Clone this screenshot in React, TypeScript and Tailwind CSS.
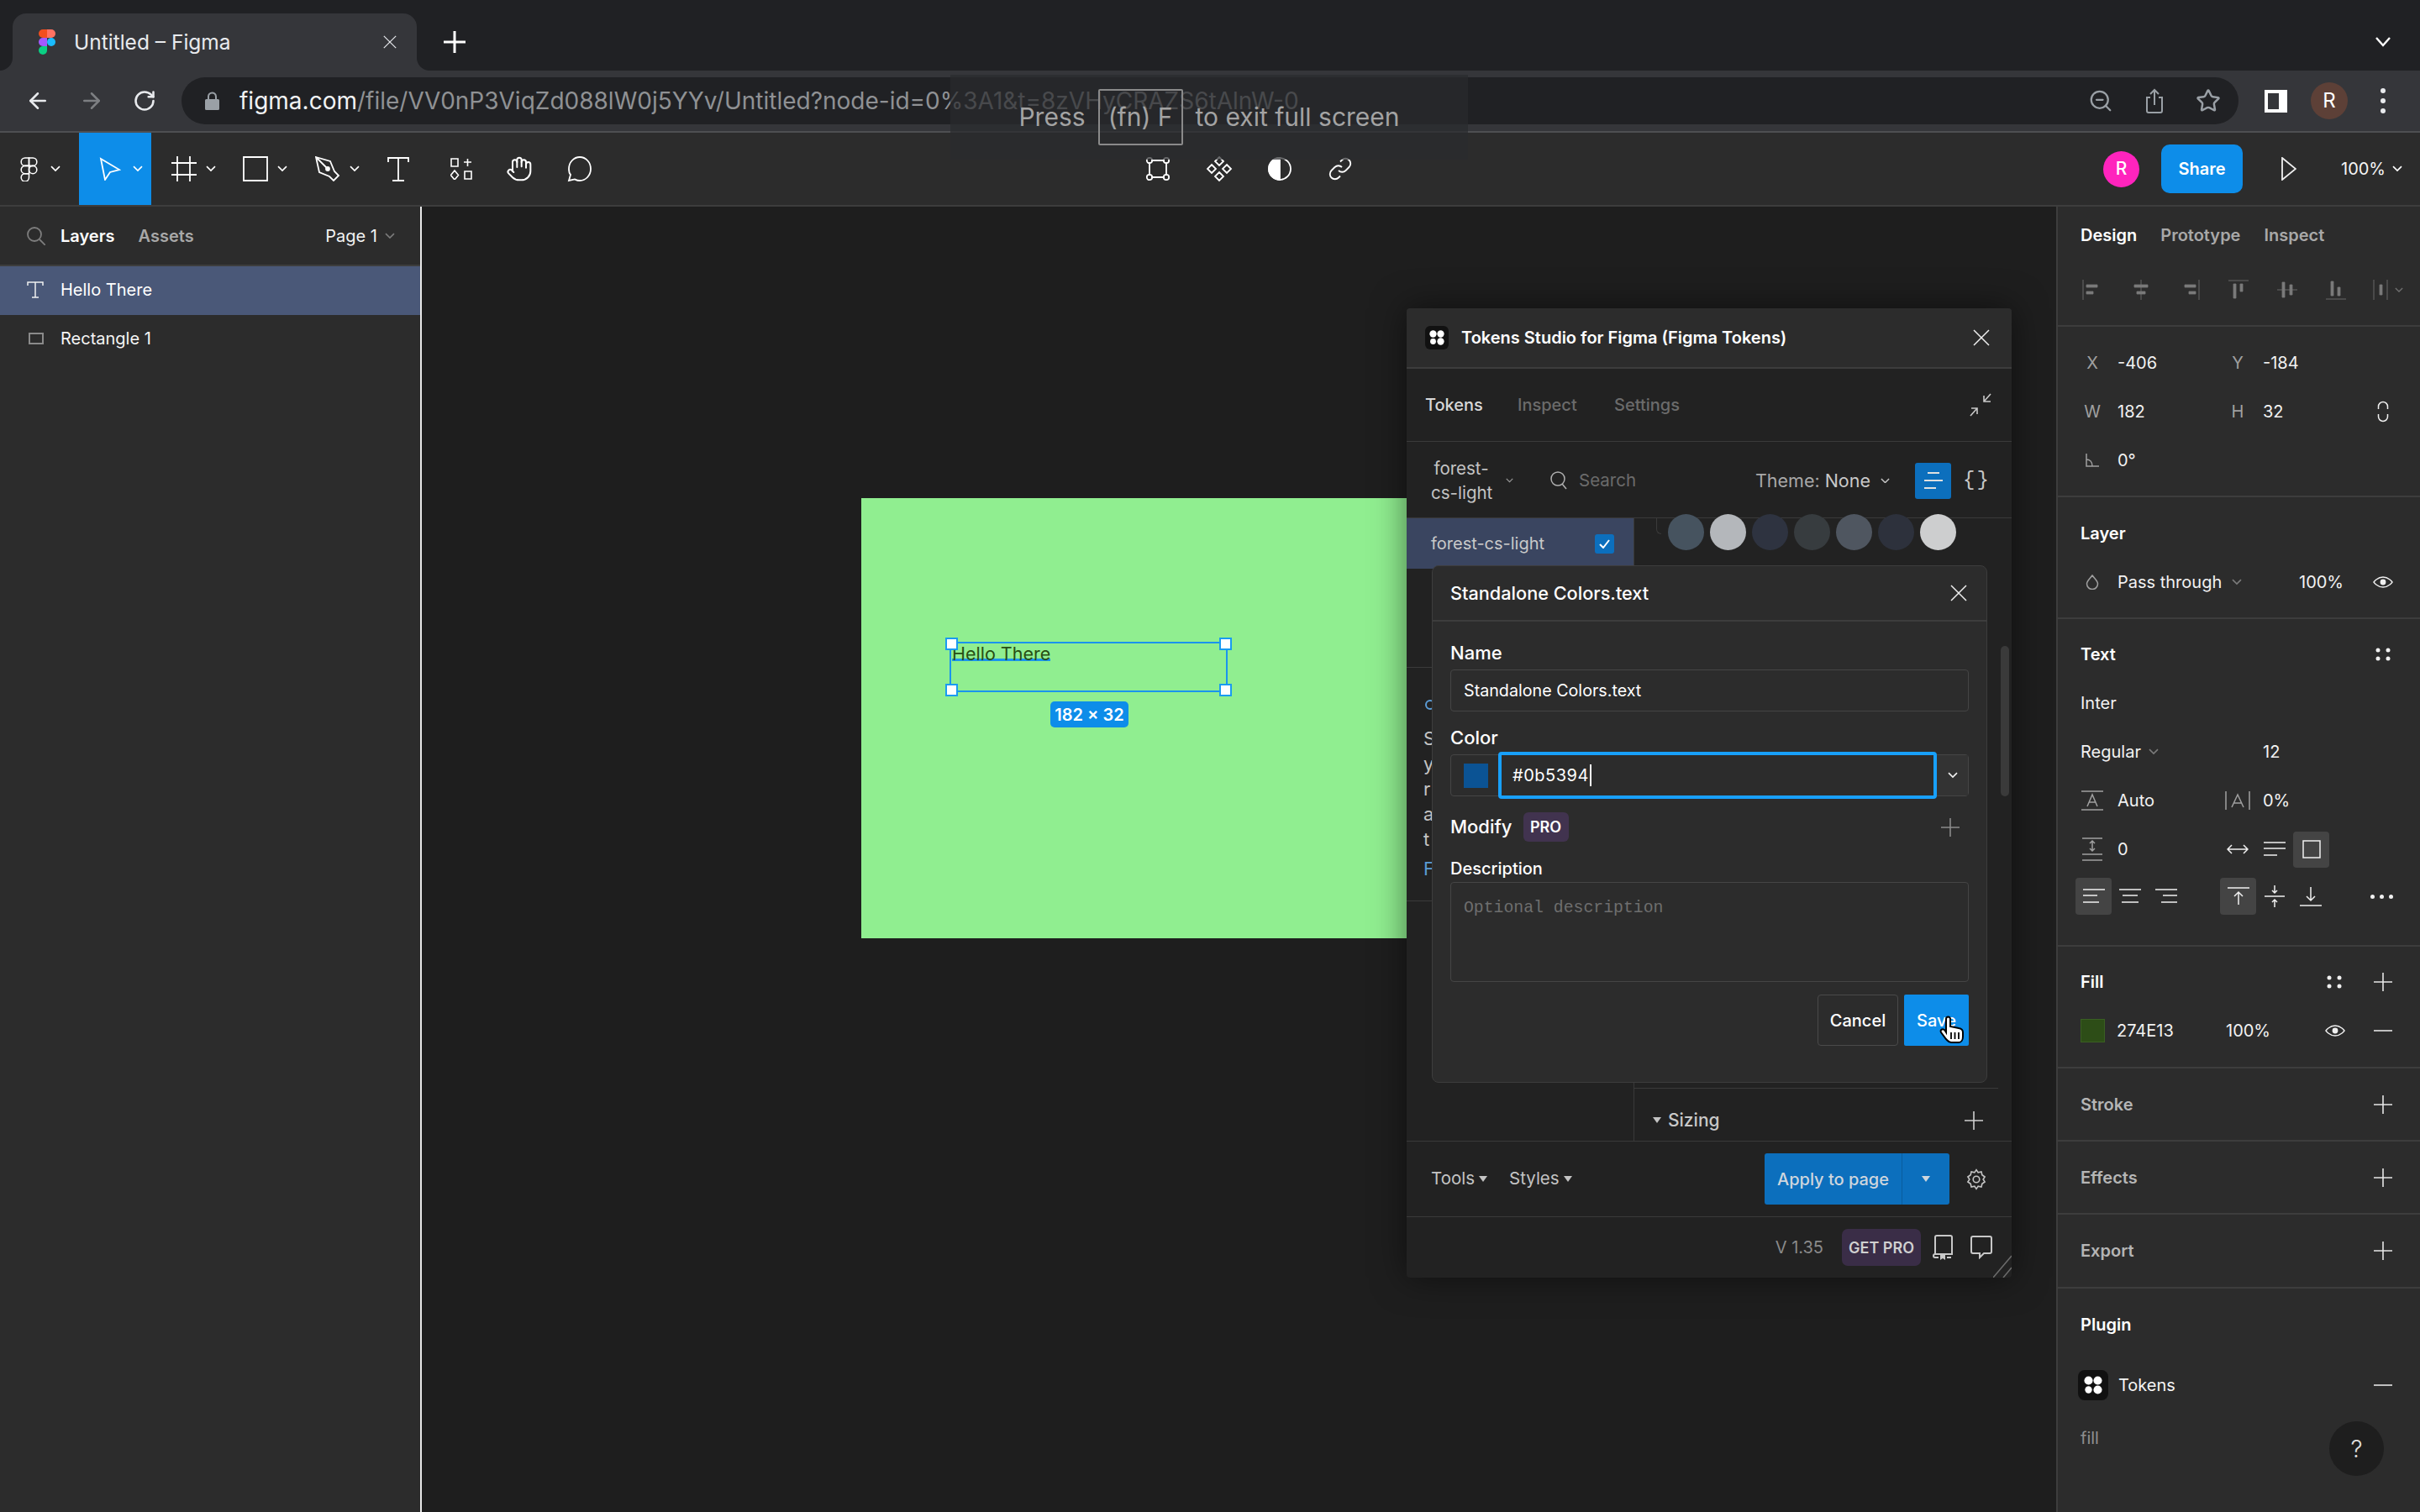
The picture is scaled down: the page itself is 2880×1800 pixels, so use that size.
import type { ReactNode } from 'react';
import { ArrowLeft, ArrowRight, RotateCw, ZoomOut, Star, Hand } from 'lucide-react';

const Caret = ({ c = '#ffffff', w = 12 }: { c?: string; w?: number }) => (
  <svg width={w} height={w * 0.6} viewBox="0 0 12 7" fill="none" stroke={c} strokeWidth="1.6"><path d="M1 1l5 5 5-5" /></svg>
);

const Tri = ({ c = '#c4c4c4', w = 10 }: { c?: string; w?: number }) => (
  <svg width={w} height={w * 0.7} viewBox="0 0 10 7" fill={c}><path d="M0 0h10L5 7z" /></svg>
);

const PlusIcon = ({ c = '#e6e6e6', s = 22 }: { c?: string; s?: number }) => (
  <svg width={s} height={s} viewBox="0 0 22 22" stroke={c} strokeWidth="1.6"><path d="M0 11h22M11 0v22" /></svg>
);

const Minus = () => (
  <svg width="22" height="4" viewBox="0 0 22 4" stroke="#e6e6e6" strokeWidth="1.6"><path d="M0 2h22" /></svg>
);

const Cross = ({ s = 20, c = '#f0f0f0' }: { s?: number; c?: string }) => (
  <svg width={s} height={s} viewBox="0 0 20 20" stroke={c} strokeWidth="1.5"><path d="M1 1l18 18M19 1L1 19" /></svg>
);

const EyeIcon = () => (
  <svg width="24" height="14" viewBox="0 0 24 14" fill="none" stroke="#f0f0f0" strokeWidth="1.4">
    <path d="M1 7s4-6 11-6 11 6 11 6-4 6-11 6S1 7 1 7z" />
    <circle cx="12" cy="7" r="3.4" fill="#f0f0f0" stroke="none" />
  </svg>
);

const FourDots = () => (
  <svg width="18" height="16" viewBox="0 0 18 16" fill="#f0f0f0">
    <circle cx="3" cy="3" r="2.5" /><circle cx="15" cy="3" r="2.5" /><circle cx="3" cy="13" r="2.5" /><circle cx="15" cy="13" r="2.5" />
  </svg>
);

const TokensLogo = ({ box, dot }: { box: string; dot: number }) => (
  <div className={`flex items-center justify-center bg-[#111111] ${box}`}>
    <svg width={dot} height={dot} viewBox="0 0 20 20" fill="#ffffff">
      <circle cx="5" cy="5" r="4.6" /><circle cx="15" cy="5" r="4.6" /><circle cx="5" cy="15" r="3.8" /><circle cx="15" cy="15" r="4.6" />
    </svg>
  </div>
);

const FigmaMono = () => (
  <svg width="21" height="29" viewBox="0 0 20 28" fill="none" stroke="#ffffff" strokeWidth="1.5">
    <path d="M10 1H5.5a4.5 4.5 0 0 0 0 9H10z" />
    <path d="M10 1h4.5a4.5 4.5 0 0 1 0 9H10z" />
    <path d="M10 10H5.5a4.5 4.5 0 0 0 0 9H10z" />
    <circle cx="14.5" cy="14.5" r="4.5" />
    <path d="M5.5 19H10v4.5a4.5 4.5 0 1 1-4.5-4.5z" />
  </svg>
);

const FigmaColor = () => (
  <svg width="20" height="30" viewBox="0 0 20 30">
    <path fill="#f24e1e" d="M10 0H5a5 5 0 0 0 0 10h5z" />
    <path fill="#ff7262" d="M10 0h5a5 5 0 0 1 0 10h-5z" />
    <path fill="#a259ff" d="M10 10H5a5 5 0 0 0 0 10h5z" />
    <circle fill="#1abcfe" cx="15" cy="15" r="5" />
    <path fill="#0acf83" d="M5 20h5v5a5 5 0 1 1-5-5z" />
  </svg>
);

const ToolIcon = ({ name }: { name: string }) => {
  const common = { fill: 'none', stroke: '#ffffff', strokeWidth: 1.8 };
  if (name === 'cursor') return <svg width="26" height="28" viewBox="0 0 26 28" {...common}><path d="M2 2l22 13-11 3-6 9z" /></svg>;
  if (name === 'frame') return <svg width="30" height="30" viewBox="0 0 30 30" {...common}><path d="M0 8h30M0 22h30M7 0v30M22 0v30" /></svg>;
  if (name === 'rect') return <svg width="30" height="30" viewBox="0 0 30 30" {...common}><path d="M1 1h28v28H1z" /></svg>;
  if (name === 'pen') return <svg width="30" height="30" viewBox="0 0 30 30" {...common}><path d="M1 1l17 5 5 12 5 5-6 6-5-5-12-5zM1 1l13 13" /><circle cx="15" cy="15" r="2" fill="#ffffff" /></svg>;
  if (name === 'text') return <svg width="26" height="30" viewBox="0 0 26 30" {...common}><path d="M1 7V2h24v5M13 2v27M6 29h14" /></svg>;
  if (name === 'comps') return <svg width="26" height="26" viewBox="0 0 26 26" fill="none" stroke="#ffffff" strokeWidth="1.6"><path d="M1 1h8v9H1zM16 5h9M20.500 1v9M17 16h8v9h-8zM5 15l4.500 5.500L5 26 .5 20.500z" /></svg>;
  if (name === 'hand') return <Hand size={32} color="#ffffff" strokeWidth={1.5} />;
  if (name === 'comment') return <svg width="30" height="32" viewBox="0 0 30 32" {...common}><path d="M15 2c7 0 13 6 13 14s-6 14-13 14c-3 0-4-.6-6-1.6L2 30l2-7C2 21 2 18 2 16 2 8 8 2 15 2z" /></svg>;
  if (name === 'transform') return <svg width="30" height="30" viewBox="0 0 30 30" {...common}><path d="M7 5h16M5 7v16M25 7v16M7 25h16" /><circle cx="5" cy="5" r="3.2" /><circle cx="25" cy="5" r="3.2" /><circle cx="5" cy="25" r="3.2" /><circle cx="25" cy="25" r="3.2" /></svg>;
  if (name === 'comp') return <svg width="32" height="32" viewBox="0 0 32 32" {...common}><path d="M16 2l5 5-5 5-5-5zM7 11l5 5-5 5-5-5zM25 11l5 5-5 5-5-5zM16 20l5 5-5 5-5-5z" /></svg>;
  if (name === 'contrast') return <svg width="30" height="30" viewBox="0 0 30 30" {...common}><circle cx="15" cy="15" r="13" /><path d="M15 2a13 13 0 0 0 0 26z" fill="#ffffff" /></svg>;
  return <svg width="28" height="28" viewBox="0 0 28 28" {...common}><path d="M12 16a6 6 0 0 0 8.5 0l4-4A6 6 0 0 0 16 3.500l-2 2M16 12a6 6 0 0 0-8.500 0l-4 4A6 6 0 0 0 12 24.500l2-2" /></svg>;
};

const Tool = ({ className, name, chev, chevGap = 'ml-[11px]' }: { className: string; name: string; chev?: boolean; chevGap?: string }) => (
  <div className={`flex h-full items-center ${className}`}>
    <ToolIcon name={name} />
    {chev && <div className={chevGap}><Caret /></div>}
  </div>
);

const AlignIcon = ({ kind }: { kind: string }) => {
  const paths: Record<string, string> = {
    left: 'M1 0v24M5 6h13v3H5zM5 14h8v3H5z',
    hcenter: 'M12 0v24M4 6h16v3H4zM7 14h10v3H7z',
    right: 'M23 0v24M6 6h13v3H6zM11 14h8v3h-8z',
    top: 'M0 1h24M6 5h3v17H6zM14 5h3v9h-3z',
    vcenter: 'M0 12h24M6 3h3v18H6zM15 6h3v12h-3z',
    bottom: 'M0 23h24M6 2h3v17H6zM14 9h3v10h-3z',
    dist: 'M1 0v24M17 0v24M8 6h3v12H8z',
  };
  return (
    <svg width="24" height="24" viewBox="0 0 24 24" fill="#7a7a7a" stroke="#7a7a7a" strokeWidth="0.8"><path d={paths[kind]} /></svg>
  );
};

const LineIcon = ({ d, w = 26, h = 22, c = '#f0f0f0' }: { d: string; w?: number; h?: number; c?: string }) => (
  <svg width={w} height={h} viewBox={`0 0 ${w} ${h}`} fill="none" stroke={c} strokeWidth="1.5"><path d={d} /></svg>
);

// right panel row: icon, value, icon, value, action
const PropRow = ({ a, b, c, d, e, className = 'h-[58px]' }: { a?: ReactNode; b?: ReactNode; c?: ReactNode; d?: ReactNode; e?: ReactNode; className?: string }) => (
  <div className={`grid grid-cols-[71px_122px_51px_117px_52px] items-center text-[20px] text-[#f2f2f2] ${className}`}>
    <div className="flex justify-center pl-[11px] text-[#a0a0a0]">{a}</div>
    <div className="flex items-center">{b}</div>
    <div className="flex justify-center pr-[9px] text-[#a0a0a0]">{c}</div>
    <div className="flex items-center">{d}</div>
    <div className="flex justify-center">{e}</div>
  </div>
);

const SectionHead = ({ title, dim, children }: { title: string; dim?: boolean; children?: ReactNode }) => (
  <div className="flex h-full items-center justify-between pl-[27px] pr-[29px]">
    <span className={`text-[20px] font-semibold ${dim ? 'text-[#b5b5b5]' : 'text-white'}`}>{title}</span>
    <div className="flex items-center">{children}</div>
  </div>
);

const dividers = 'border-b-[2px] border-[#3d3d3d]';

function TabStrip() {
  return (
    <div className="flex h-[84px] items-end bg-[#202124] pl-[15px]">
      <div className="relative flex h-[68px] w-[481px] items-center rounded-t-[16px] bg-[#35363a] pl-[31px]">
        <svg className="absolute bottom-0 left-[-15px]" width="15" height="15" viewBox="0 0 15 15" fill="#35363a"><path d="M15 0v15H0c8 0 15-7 15-15z" /></svg>
        <svg className="absolute bottom-0 right-[-15px]" width="15" height="15" viewBox="0 0 15 15" fill="#35363a"><path d="M0 0v15h15C7 15 0 8 0 0z" /></svg>
        <FigmaColor />
        <span className="ml-[22px] text-[24.500px] text-[#e8eaed]">Untitled – Figma</span>
        <div className="ml-auto mr-[24px]"><Cross s={16} c="#e8eaed" /></div>
      </div>
      <div className="mb-[21px] ml-[32px]"><svg width="26" height="26" viewBox="0 0 26 26" stroke="#ffffff" strokeWidth="3"><path d="M0 13h26M13 0v26" /></svg></div>
      <div className="mb-[28px] ml-auto mr-[35px]"><svg width="18" height="12" viewBox="0 0 18 12" fill="none" stroke="#ffffff" strokeWidth="2.4"><path d="M1 1l8 9 8-9" /></svg></div>
    </div>
  );
}

function AddressBar() {
  return (
    <div className="flex h-[72px] items-center bg-[#35363a] pl-[30px]">
      <ArrowLeft size={30} color="#e8eaed" strokeWidth={2} />
      <div className="ml-[34px]"><ArrowRight size={30} color="#7d7f82" strokeWidth={2} /></div>
      <div className="ml-[34px]"><RotateCw size={28} color="#e8eaed" strokeWidth={2.2} /></div>
      <div className="ml-[30px] flex h-[56px] w-[2448px] items-center rounded-[28px] bg-[#202124] pl-[28px] pr-[21px]">
        <svg width="17" height="22" viewBox="0 0 17 22" fill="#9aa0a6"><path d="M3 9V6a5.500 5.500 0 0 1 11 0v3h1.500a1.500 1.500 0 0 1 1.500 1.500v10a1.500 1.500 0 0 1-1.500 1.500h-14A1.500 1.500 0 0 1 0 20.500v-10A1.500 1.500 0 0 1 1.500 9zm2 0h7V6a3.500 3.500 0 0 0-7 0z" /></svg>
        <span className="ml-[24px] whitespace-nowrap text-[28px] text-[#8f9194]"><span className="text-[#f1f3f4]">figma.com</span>/file/VV0nP3ViqZd088lW0j5YYv/Untitled?node-id=0%3A1&amp;t=8zVHyCRAZS6tAlnW-0</span>
        <div className="ml-auto flex items-center gap-[37px]">
          <ZoomOut size={30} color="#9aa0a6" strokeWidth={1.8} />
          <svg width="24" height="30" viewBox="0 0 24 30" fill="none" stroke="#9aa0a6" strokeWidth="2"><path d="M7 11H3v16a2 2 0 0 0 2 2h14a2 2 0 0 0 2-2V11h-4M12 20V2M7 7l5-5 5 5" /></svg>
          <Star size={30} color="#9aa0a6" strokeWidth={2} />
        </div>
      </div>
      <div className="ml-[31px] flex h-[27px] w-[27px] justify-end border-[4px] border-r-[10px] border-white" />
      <div className="ml-[28px] flex h-[44px] w-[44px] items-center justify-center rounded-full bg-[#5d4037] text-[24px] text-white">R</div>
      <div className="ml-[39px] flex flex-col gap-[6px]">
        <div className="h-[6px] w-[6px] rounded-full bg-[#e8eaed]" />
        <div className="h-[6px] w-[6px] rounded-full bg-[#e8eaed]" />
        <div className="h-[6px] w-[6px] rounded-full bg-[#e8eaed]" />
      </div>
    </div>
  );
}

function Toolbar() {
  return (
    <div className={`flex h-[88px] items-center bg-[#2c2c2c] ${dividers}`}>
      <div className="flex h-full w-[94px] items-center pl-[24px]"><FigmaMono /><div className="ml-[15px]"><Caret /></div></div>
      <Tool className="w-[86px] bg-[#0d8de9] pl-[24px]" name="cursor" chev chevGap="ml-[14px]" />
      <Tool className="w-[84px] pl-[24px]" name="frame" chev />
      <Tool className="w-[85px] pl-[25px]" name="rect" chev />
      <Tool className="w-[86px] pl-[26px]" name="pen" chev />
      <Tool className="w-[78px] pl-[26px]" name="text" />
      <Tool className="w-[72px] pl-[23px]" name="comps" />
      <Tool className="w-[69px] pl-[17px]" name="hand" />
      <Tool className="w-[72px] pl-[21px]" name="comment" />
      <div className="ml-[616px] flex h-full">
        <Tool className="w-[72px] justify-center" name="transform" />
        <Tool className="w-[73px] justify-center" name="comp" />
        <Tool className="w-[72px] justify-center" name="contrast" />
        <Tool className="w-[72px] justify-center" name="link" />
      </div>
      <div className="ml-auto flex items-center pr-[21px]">
        <div className="flex h-[43px] w-[43px] items-center justify-center rounded-full bg-[#ff24bd] text-[21px] font-medium text-white">R</div>
        <div className="ml-[26px] flex h-[58px] w-[97px] items-center justify-center rounded-[10px] bg-[#0d8de9] text-[20px] font-semibold text-white">Share</div>
        <div className="ml-[46px]"><svg width="18" height="28" viewBox="0 0 18 28" fill="none" stroke="#f0f0f0" strokeWidth="1.8"><path d="M1 1l16 13L1 27z" /></svg></div>
        <span className="ml-[53px] w-[50px] whitespace-nowrap text-[20px] text-[#f5f5f5]">100%</span>
        <div className="ml-[11px]"><Caret /></div>
      </div>
    </div>
  );
}

function LayersPanel() {
  return (
    <div className="w-[500px] shrink-0 bg-[#2c2c2c] text-[20px]">
      <div className={`flex h-[71px] items-center pl-[32px] pr-[30px] ${dividers}`}>
        <svg width="22" height="22" viewBox="0 0 22 22" fill="none" stroke="#7d7d7d" strokeWidth="1.8"><circle cx="9" cy="9" r="8" /><path d="M15 15l7 7" /></svg>
        <span className="ml-[18px] font-semibold text-white">Layers</span>
        <span className="ml-[28px] font-semibold text-[#a8a8a8]">Assets</span>
        <span className="ml-auto text-[#f2f2f2]">Page 1</span>
        <div className="ml-[9px]"><Caret c="#7a7a7a" /></div>
      </div>
      <div className="flex h-[58px] items-center bg-[#4a5878] pb-[2px] pl-[32px]">
        <LineIcon w={20} h={20} d="M1 5V1h18v4M10 1v18M6 19h8" />
        <span className="ml-[20px] text-white">Hello There</span>
      </div>
      <div className="flex h-[58px] items-center pb-[2px] pl-[34px]">
        <svg width="18" height="14" viewBox="0 0 18 14" fill="none" stroke="#8a8a8a" strokeWidth="2"><path d="M1 1h16v12H1z" /></svg>
        <span className="ml-[20px] text-[#f5f5f5]">Rectangle 1</span>
      </div>
    </div>
  );
}

function Selection() {
  const handle = 'absolute h-[15px] w-[15px] border-[2px] border-[#1a9bf0] bg-white';
  return (
    <div className="absolute left-[628px] top-[518px] h-[60px] w-[331px] border-[2px] border-[#1a94ee]">
      <span className="absolute left-[1px] top-[-1px] h-[22px] whitespace-nowrap border-b-[3px] border-[#1a94ee] text-[21.500px] leading-[26px] text-[#274e13]">Hello There</span>
      <div className={`${handle} left-[-7px] top-[-7px]`} />
      <div className={`${handle} right-[-7px] top-[-7px]`} />
      <div className={`${handle} bottom-[-7px] left-[-7px]`} />
      <div className={`${handle} bottom-[-7px] right-[-7px]`} />
      <div className="absolute left-[118px] top-[69px] flex h-[31px] w-[93px] items-center justify-center rounded-[5px] bg-[#0d8de9] text-[20px] font-semibold text-white">182 × 32</div>
    </div>
  );
}

function TokenModal() {
  const label = 'flex h-[30px] items-center font-medium text-white';
  return (
    <div className="absolute left-[30px] top-[56px] h-[616px] w-[661px] rounded-[8px] border-[1px] border-[#3d3d3d] bg-[#2c2c2c]">
      <div className={`flex h-[66px] items-center justify-between pl-[21px] pr-[23px] ${dividers}`}>
        <span className="text-[21.700px] font-medium text-white">Standalone Colors.text</span>
        <Cross />
      </div>
      <div className="px-[21px] pt-[22px]">
        <div className={`${label} text-[22px]`}>Name</div>
        <div className="mt-[5px] flex h-[50px] items-center rounded-[4px] border-[1px] border-[#454545] pl-[15px] pt-[2px] text-[19.700px] text-white">Standalone Colors.text</div>
        <div className={`${label} mt-[16px] text-[22px]`}>Color</div>
        <div className="mt-[5px] flex h-[50px] items-center rounded-[4px] border-[1px] border-[#454545]">
          <div className="ml-[15px] h-[29px] w-[29px] bg-[#0b5394]" />
          <div className="ml-[12px] flex h-[56px] w-[522px] shrink-0 items-center rounded-[4px] border-[4px] border-[#18a0fb] bg-[#2c2c2c] pl-[13px] text-[20px] tracking-[0.5px] text-white">
            #0b5394<span className="ml-[1px] h-[26px] w-[2px] bg-white" />
          </div>
          <div className="flex flex-1 items-center justify-center self-stretch bg-[#333333]"><Caret c="#f0f0f0" /></div>
        </div>
        <div className="mt-[19px] flex h-[35px] items-center">
          <span className="text-[22px] font-medium text-white">Modify</span>
          <span className="ml-[13px] flex h-[35px] w-[54px] items-center justify-center rounded-[6px] bg-[#41334f] text-[18px] font-semibold text-white">PRO</span>
          <div className="ml-auto mr-[11px]"><PlusIcon c="#8a8a8a" /></div>
        </div>
        <div className={`${label} mt-[17px] text-[20px]`}>Description</div>
        <div className="mt-[1px] h-[119px] rounded-[4px] border-[1px] border-[#454545] pl-[15px] pt-[18px] font-['Liberation_Mono',monospace] text-[19.800px] leading-[24px] text-[#6e6e6e]">Optional description</div>
        <div className="mt-[15px] flex justify-end gap-[7px]">
          <div className="flex h-[61px] w-[96px] items-center justify-center rounded-[4px] border-[1px] border-[#4a4a4a] text-[20px] font-medium text-white">Cancel</div>
          <div className="relative flex h-[61px] w-[77px] items-center justify-center rounded-[2px] bg-[#0d8de9] text-[20px] font-medium text-white">
            Save
            <svg className="absolute left-[42px] top-[25px]" width="30" height="34" viewBox="0 0 30 34" fill="#ffffff" stroke="#000000" strokeWidth="2">
              <path d="M8 20V4a2.500 2.500 0 0 1 5 0v9l10 2c3 .5 5 2 5 5v5c0 4-2 7-5 7H14c-3 0-4-2-6-4l-6-8c-1-2 0-3 1-3.500s2.500 0 3.500 1z" />
              <path d="M14 20v8M18.500 20v8M23 20v8" strokeWidth="1.8" fill="none" />
            </svg>
          </div>
        </div>
      </div>
    </div>
  );
}

function PluginWindow() {
  return (
    <div className="absolute left-[1172px] top-[121px] flex h-[1154px] w-[720px] flex-col overflow-hidden rounded-[4px] bg-[#222222] text-[20px] shadow-[0_0_40px_rgba(0,0,0,0.5)]">
      <div className={`flex h-[72px] shrink-0 items-center bg-[#2c2c2c] pl-[22px] pr-[26px] ${dividers}`}>
        <TokensLogo box="h-[28px] w-[28px] rounded-[6px]" dot={18} />
        <span className="ml-[15px] text-[20px] font-semibold text-white">Tokens Studio for Figma (Figma Tokens)</span>
        <div className="ml-auto"><Cross /></div>
      </div>
      <div className="flex h-[87px] shrink-0 items-center border-b-[1px] border-[#3a3a3a] pl-[22px] pr-[24px] text-[20px] font-medium">
        <span className="w-[67px] text-[#d8d8d8]">Tokens</span>
        <span className="ml-[43px] w-[72px] text-[#6b6b6b]">Inspect</span>
        <span className="ml-[43px] text-[#6b6b6b]">Settings</span>
        <div className="ml-auto">
          <svg width="26" height="28" viewBox="0 0 26 28" fill="none" stroke="#c8c8c8" strokeWidth="1.600"><path d="M25 1l-8 9M17 3v7h8M1 27l8-9M2 18h7v7" /></svg>
        </div>
      </div>
      <div className="flex h-[91px] shrink-0 items-center border-b-[1px] border-[#3a3a3a] pl-[29px] pr-[29px] pt-[2px] text-[20.500px]">
        <div className="w-[72px] whitespace-nowrap text-center leading-[29px] text-[#c4c4c4]">forest-<br />cs-light</div>
        <div className="ml-[17px]"><Caret c="#9a9a9a" w={9} /></div>
        <div className="ml-[44px]"><svg width="20" height="22" viewBox="0 0 20 22" fill="none" stroke="#b0b0b0" strokeWidth="1.500"><circle cx="9" cy="9" r="8" /><path d="M14 15l5 6" /></svg></div>
        <span className="ml-[14px] text-[#6b6b6b]">Search</span>
        <span className="ml-auto text-[21.500px] text-[#a8a8a8]">Theme: <span className="text-[#c9c9c9]">None</span></span>
        <div className="ml-[12px]"><Caret c="#c4c4c4" w={11} /></div>
        <div className="ml-[30px] flex h-[43px] w-[43px] items-center justify-center rounded-[3px] bg-[#0c6fbd]">
          <svg width="22" height="24" viewBox="0 0 22 24" stroke="#e0e0e0" strokeWidth="2"><path d="M4 3h14M0 12h22M0 21h14" /></svg>
        </div>
        <span className="ml-[14px] w-[29px] font-['Liberation_Mono',monospace] text-[24px] tracking-[2px] text-[#c8c8c8]">{'{}'}</span>
      </div>
      <div className="relative flex min-h-0 flex-1">
        <div className="relative w-[271px] shrink-0 border-r-[1px] border-[#3a3a3a]">
          <div className="flex h-[60px] items-center justify-between bg-[#3a4560] pl-[29px] pr-[23px] text-[20px] text-[#c9c9c9]">
            forest-cs-light
            <span className="flex h-[23px] w-[23px] items-center justify-center rounded-[3px] bg-[#0c6fbd]">
              <svg width="13" height="11" viewBox="0 0 13 11" fill="none" stroke="#ffffff" strokeWidth="2"><path d="M1 6l4 4 7-9" /></svg>
            </span>
          </div>
          <div className="absolute left-0 top-[177px] h-[1px] w-[30px] bg-[#3a3a3a]" />
          <div className="absolute left-[22px] top-[216px] h-[12px] w-[12px] rounded-full border-[2px] border-[#5b9bd5]" />
          <div className="absolute left-[20px] top-[251px] flex flex-col gap-[8px] text-[22px] leading-[22px] text-[#c4c4c4]">
            <span>S</span><span>y</span><span>r</span><span>a</span><span>t</span>
            <span className="mt-[5px] text-[#5b9bd5]">F</span>
          </div>
          <div className="absolute left-0 top-[455px] h-[1px] w-[30px] bg-[#3a3a3a]" />
        </div>
        <div className="relative flex min-w-0 flex-1 flex-col">
          <div className="absolute left-[26px] top-0 h-[19px] w-[6px] rounded-bl-[6px] border-b-[1px] border-l-[1px] border-[#3a3a3a]" />
          <div className="ml-[40px] mt-[-5px] flex gap-[7px]">
            {['#46535f', '#b4b7bb', '#2e3340', '#373c3f', '#4f5660', '#2d313c', '#cdcecf'].map(c => (
              <div key={c} className="h-[43px] w-[43px] rounded-full" style={{ backgroundColor: c }} />
            ))}
          </div>
          <div className="mr-[16px] mt-auto flex h-[63px] items-center border-t-[1px] border-[#3a3a3a] pl-[22px] pr-[18px] pt-[13px]">
            <Tri />
            <span className="ml-[8px] text-[21px] font-medium text-[#c8c8c8]">Sizing</span>
            <div className="ml-auto"><PlusIcon c="#d0d0d0" /></div>
          </div>
        </div>
        <TokenModal />
        <div className="absolute right-[3px] top-[152px] h-[179px] w-[10px] rounded-[5px] bg-[#3a3a3a]" />
      </div>
      <div className="flex h-[90px] shrink-0 items-center border-t-[1px] border-[#3a3a3a] pl-[29px] pr-[29px] text-[20.500px] text-[#c4c4c4]">
        <span>Tools</span>
        <div className="ml-[5px]"><Tri /></div>
        <span className="ml-[26px]">Styles</span>
        <div className="ml-[5px]"><Tri /></div>
        <div className="ml-auto flex h-[61px] w-[220px] rounded-[3px] bg-[#0c6fbd] text-[20px] text-[#cfd6dd]">
          <div className="flex w-[164px] items-center justify-center border-r-[1px] border-[#0a5d9e] font-medium">Apply to page</div>
          <div className="flex flex-1 items-center justify-center"><Tri c="#cfd6dd" /></div>
        </div>
        <div className="ml-[19px]">
          <svg width="26" height="26" viewBox="0 0 24 24" fill="none" stroke="#c4c4c4" strokeWidth="1.500"><circle cx="12" cy="12" r="3.500" /><path d="M12 1.500l2 3 3.500-.8.8 3.500 3 2-1.800 2.800 1.800 2.800-3 2-.8 3.500-3.500-.8-2 3-2-3-3.500.8-.8-3.500-3-2 1.800-2.800-1.800-2.800 3-2 .8-3.500 3.500.8z" /></svg>
        </div>
      </div>
      <div className="relative flex h-[73px] shrink-0 items-center justify-end border-t-[1px] border-[#3a3a3a] pr-[23px]">
        <span className="text-[20px] text-[#8a8a8a]">V 1.35</span>
        <div className="ml-[22px] flex h-[44px] w-[94px] items-center justify-center rounded-[7px] bg-[#3a2d47] text-[18px] font-semibold text-[#d0d0d0]">GET PRO</div>
        <div className="ml-[14px]">
          <svg width="24" height="30" viewBox="0 0 24 30" fill="none" stroke="#c8c8c8" strokeWidth="2"><path d="M3 23V3a2 2 0 0 1 2-2h16a2 2 0 0 1 2 2v20H3a2 2 0 0 0 0 4h4M22 27h-5" /><path d="M9 24h6v6l-3-2-3 2z" fill="#c8c8c8" stroke="none" /></svg>
        </div>
        <div className="ml-[21px]">
          <svg width="26" height="28" viewBox="0 0 26 28" fill="none" stroke="#c8c8c8" strokeWidth="2"><path d="M3 1h20a2 2 0 0 1 2 2v16a2 2 0 0 1-2 2h-7l-5 5v-5H3a2 2 0 0 1-2-2V3a2 2 0 0 1 2-2z" /></svg>
        </div>
        <svg className="absolute bottom-0 right-0" width="22" height="30" viewBox="0 0 22 30" fill="none" stroke="#6b6b6b" strokeWidth="1.500"><path d="M0 30L22 4M12 30l10-12" /></svg>
      </div>
    </div>
  );
}

function Canvas() {
  return (
    <div className="relative min-w-0 flex-1 overflow-hidden bg-[#1e1e1e]">
      <div className="absolute left-[523px] top-[347px] h-[524px] w-[720px] bg-[#90ee90]" />
      <Selection />
      <PluginWindow />
    </div>
  );
}

function DesignPanel() {
  const alignBox = 'flex h-[44px] w-[43px] items-center justify-center rounded-[4px]';
  return (
    <div className="relative w-[433px] shrink-0 border-l-[2px] border-[#3d3d3d] bg-[#2c2c2c] text-[20px]">
      <div className={`h-[143px] ${dividers}`}>
        <div className="flex h-[68px] items-center gap-[28px] pl-[27px] font-semibold">
          <span className="text-white">Design</span>
          <span className="text-[#a8a8a8]">Prototype</span>
          <span className="text-[#a8a8a8]">Inspect</span>
        </div>
        <div className="flex h-[62px] items-center gap-[34px] pl-[29px]">
          <AlignIcon kind="left" />
          <AlignIcon kind="hcenter" />
          <AlignIcon kind="right" />
          <AlignIcon kind="top" />
          <AlignIcon kind="vcenter" />
          <AlignIcon kind="bottom" />
          <div className="ml-[-2px] flex items-center gap-[2px]"><AlignIcon kind="dist" /><Caret c="#6f6f6f" w={10} /></div>
        </div>
      </div>
      <div className={`h-[203px] pt-[14px] ${dividers}`}>
        <PropRow a="X" b="-406" c="Y" d="-184" />
        <PropRow a="W" b="182" c="H" d="32" e={<LineIcon w={14} h={26} d="M1.500 10V7a5.500 5.500 0 0 1 11 0v3M1.500 16v3a5.500 5.500 0 0 0 11 0v-3" />} />
        <PropRow a={<LineIcon w={16} h={16} c="#a0a0a0" d="M1 0v15h15M1 7c4 0 7 3 7 8" />} b="0°" />
      </div>
      <div className={`h-[145px] ${dividers}`}>
        <div className="h-[14px]" />
        <div className="h-[58px]"><SectionHead title="Layer" /></div>
        <PropRow
          a={<LineIcon w={16} h={18} c="#a0a0a0" d="M8 1C5 5 1.500 7.500 1.500 11a6.500 6.500 0 0 0 13 0C14.500 7.500 11 5 8 1z" />}
          b={<div className="flex items-center whitespace-nowrap">Pass through<div className="ml-[12px]"><Caret c="#7a7a7a" /></div></div>}
          d={<span className="pl-[43px]">100%</span>}
          e={<EyeIcon />}
        />
      </div>
      <div className={`h-[390px] pt-[13px] ${dividers}`}>
        <div className="h-[58px]"><SectionHead title="Text"><div className="mr-[6px]"><FourDots /></div></SectionHead></div>
        <div className="flex h-[58px] items-center pl-[27px] text-[#f2f2f2]">Inter</div>
        <div className="flex h-[58px] items-center pl-[27px] text-[#f2f2f2]">
          <span className="w-[81px]">Regular</span>
          <Caret c="#7a7a7a" />
          <span className="ml-[124px]">12</span>
        </div>
        <PropRow
          a={<LineIcon w={26} h={24} c="#a0a0a0" d="M0 1h26M0 23h26M7 19l6-14 6 14M9 14h8" />}
          b="Auto"
          c={<LineIcon w={30} h={22} c="#a0a0a0" d="M1 0v22M29 0v22M8 19l7-15 7 15M10 14h10" />}
          d="0%"
        />
        <PropRow
          a={<LineIcon w={24} h={28} c="#a0a0a0" d="M0 1h24M0 20h24M0 27h24M12 4v12M9 7l3-3 3 3M9 13l3 3 3-3" />}
          b="0"
          c={<LineIcon w={26} h={16} d="M1 8h24M6 3L1 8l5 5M20 3l5 5-5 5" />}
          d={
            <div className="ml-[-7px] flex items-center">
              <div className="flex w-[42px] justify-center"><LineIcon w={26} h={18} d="M0 1h26M0 8h26M0 16h16" /></div>
              <div className="ml-[1px] flex h-[43px] w-[43px] items-center justify-center rounded-[4px] bg-[#444444]">
                <LineIcon w={22} h={22} d="M1 1h20v20H1z" />
              </div>
            </div>
          }
        />
        <div className="flex h-[54px] items-center pl-[21px]">
          <div className={`${alignBox} bg-[#444444]`}><LineIcon w={26} h={18} d="M0 1h26M0 8h17M0 16h19" /></div>
          <div className={alignBox}><LineIcon w={26} h={18} d="M0 1h26M4 8h18M3 16h20" /></div>
          <div className={alignBox}><LineIcon w={26} h={18} d="M0 1h26M9 8h17M7 16h19" /></div>
          <div className={`${alignBox} ml-[43px] bg-[#444444]`}><LineIcon w={26} h={22} d="M0 1h26M13 21V6M8 11l5-5 5 5" /></div>
          <div className={alignBox}><LineIcon w={24} h={26} d="M0 13h24M12 0v9M9 6l3 3 3-3M12 26v-9M9 20l3-3 3 3" /></div>
          <div className={alignBox}><LineIcon w={26} h={24} d="M0 23h26M13 1v16M8 12l5 5 5-5" /></div>
          <div className="ml-[50px] flex gap-[6px]">
            <div className="h-[5px] w-[5px] rounded-full bg-[#f0f0f0]" />
            <div className="h-[5px] w-[5px] rounded-full bg-[#f0f0f0]" />
            <div className="h-[5px] w-[5px] rounded-full bg-[#f0f0f0]" />
          </div>
        </div>
      </div>
      <div className={`h-[145px] pt-[13px] ${dividers}`}>
        <div className="h-[58px]">
          <SectionHead title="Fill">
            <FourDots />
            <div className="ml-[38px] mr-[4px]"><PlusIcon /></div>
          </SectionHead>
        </div>
        <div className="flex h-[58px] items-center pl-[27px] text-[#f2f2f2]">
          <div className="h-[28px] w-[29px] shrink-0 border-[1px] border-[#3a5f22] bg-[#2d4d17]" />
          <span className="ml-[14px] w-[130px]">274E13</span>
          <span className="w-[118px]">100%</span>
          <EyeIcon />
          <div className="ml-[34px]"><Minus /></div>
        </div>
      </div>
      <div className={`h-[87px] ${dividers}`}><SectionHead title="Stroke" dim><div className="mr-[4px]"><PlusIcon /></div></SectionHead></div>
      <div className={`h-[87px] ${dividers}`}><SectionHead title="Effects" dim><div className="mr-[4px]"><PlusIcon /></div></SectionHead></div>
      <div className={`h-[88px] ${dividers}`}><SectionHead title="Export" dim><div className="mr-[4px]"><PlusIcon /></div></SectionHead></div>
      <div className="h-[14px]" />
      <div className="h-[58px]"><SectionHead title="Plugin" /></div>
      <div className="mt-[14px] flex h-[58px] items-center pl-[24px] pr-[33px]">
        <TokensLogo box="h-[36px] w-[36px] rounded-[8px]" dot={22} />
        <span className="ml-[12px] text-[#f5f5f5]">Tokens</span>
        <div className="ml-auto"><Minus /></div>
      </div>
      <div className="flex h-[68px] items-center pl-[27px] text-[#8f8f8f]">fill</div>
      <div className="absolute bottom-[43px] right-[43px] flex h-[65px] w-[65px] items-center justify-center rounded-full bg-[#1e1e1e] text-[28px] font-light text-[#e0e0e0]">?</div>
    </div>
  );
}

export default function App() {
  return (
    <div className="relative flex h-[1800px] w-[2880px] flex-col overflow-hidden bg-[#1e1e1e] font-['Inter',sans-serif]">
      <TabStrip />
      <AddressBar />
      <div className="h-[2px] bg-[#4e4f52]" />
      <Toolbar />
      <div className="flex min-h-0 flex-1">
        <LayersPanel />
        <div className="w-[2px] shrink-0 bg-[#e8e8e8]" />
        <Canvas />
        <DesignPanel />
      </div>
      {/* fullscreen hint sits over the browser bar */}
      <div className="absolute left-[1131px] top-[89px] flex h-[101px] w-[616px] items-center justify-center bg-[#2a2b2e]/70 text-[30px] text-[#a3a3a3]">
        <span>Press</span>
        <span className="mx-[15px] flex h-[67px] w-[101px] items-center justify-center rounded-[2px] border-[2px] border-[#8a8a8a]">(fn) F</span>
        <span>to exit full screen</span>
      </div>
    </div>
  );
}
